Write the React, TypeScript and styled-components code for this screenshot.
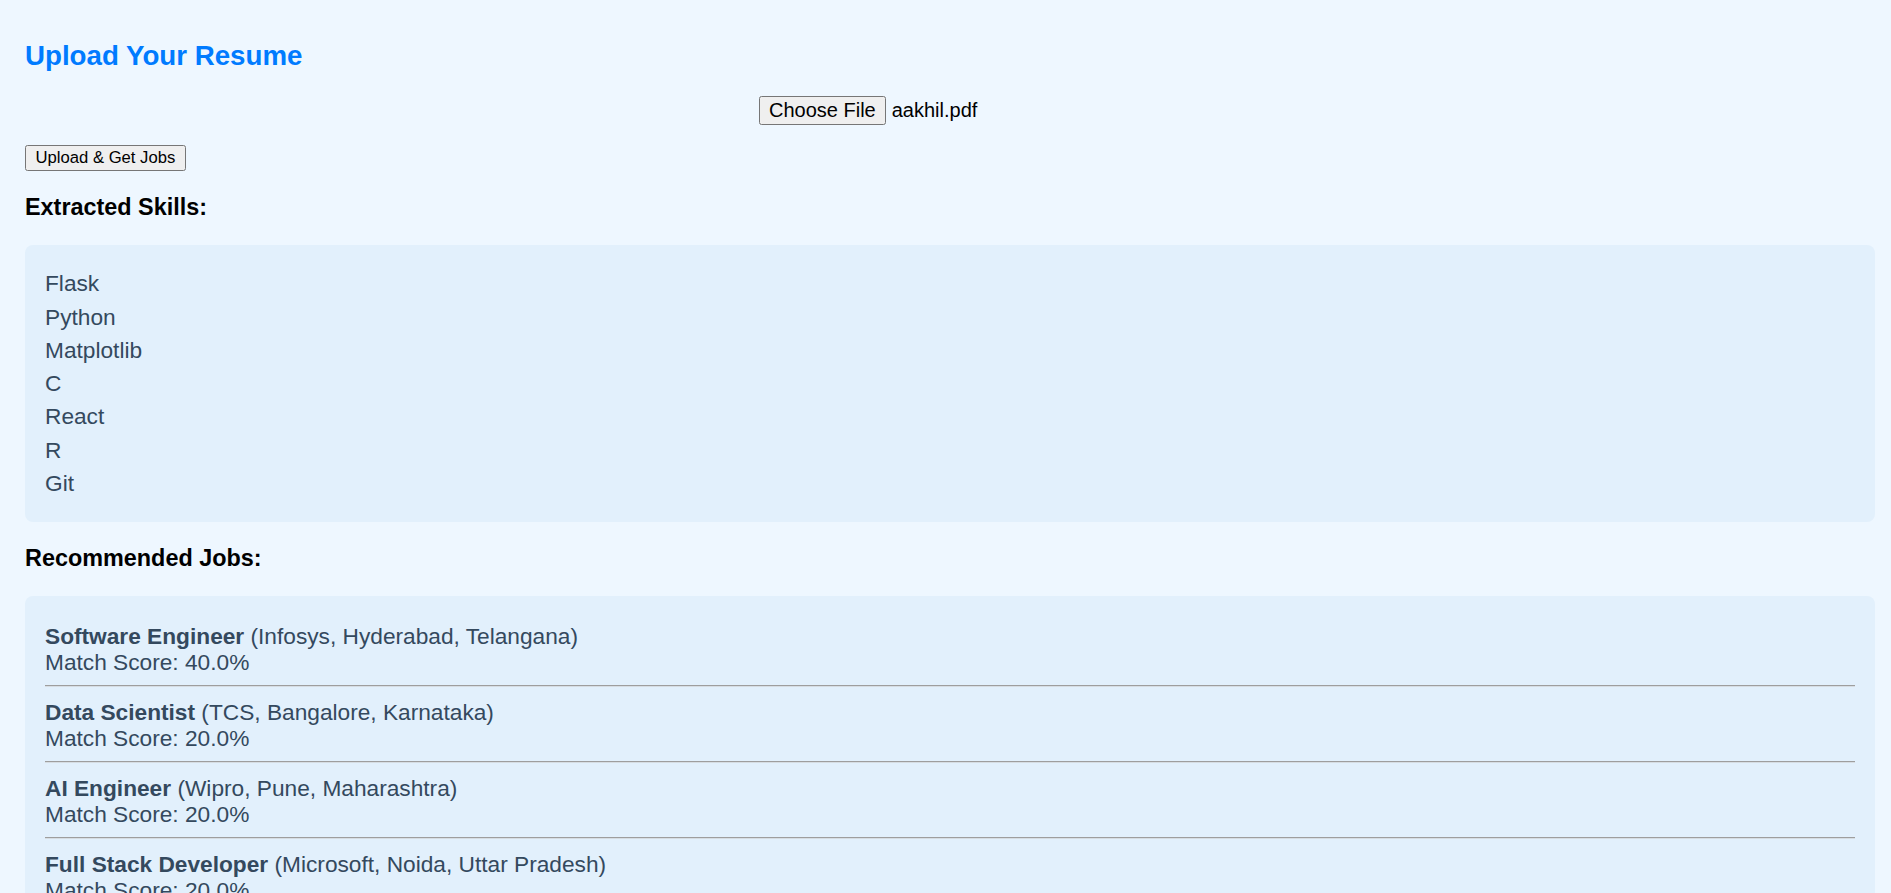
import React from 'react'
import styled, { createGlobalStyle } from 'styled-components'

interface Job {
  title: string
  company: string
  location: string
  score: number
}

const skills = ['Flask', 'Python', 'Matplotlib', 'C', 'React', 'R', 'Git']

const jobs: Job[] = [
  { title: 'Software Engineer', company: 'Infosys', location: 'Hyderabad, Telangana', score: 40 },
  { title: 'Data Scientist', company: 'TCS', location: 'Bangalore, Karnataka', score: 20 },
  { title: 'AI Engineer', company: 'Wipro', location: 'Pune, Maharashtra', score: 20 },
  { title: 'Full Stack Developer', company: 'Microsoft', location: 'Noida, Uttar Pradesh', score: 20 },
]

const GlobalStyle = createGlobalStyle`
  html, body {
    margin: 0;
    background: #eef7ff;
  }
  body {
    font-family: "Liberation Sans", Arial, sans-serif;
  }
`

export default function App() {
  return (
    <>
      <GlobalStyle />
      <Page>
        <Title>Upload Your Resume</Title>
        <FilePicker>
          <PickerButton type="button">Choose File</PickerButton>
          <FileName>aakhil.pdf</FileName>
        </FilePicker>
        <UploadButton type="button">Upload &amp; Get Jobs</UploadButton>

        <SectionTitle>Extracted Skills:</SectionTitle>
        <Panel>
          <SkillList>
            {skills.map((skill) => (
              <SkillItem key={skill}>{skill}</SkillItem>
            ))}
          </SkillList>
        </Panel>

        <SectionTitle>Recommended Jobs:</SectionTitle>
        <Panel compact>
          <JobList>
            {jobs.map((job) => (
              <JobItem key={job.title}>
                <JobLine>
                  <JobTitle>{job.title}</JobTitle> ({job.company}, {job.location})
                </JobLine>
                <JobLine>Match Score: {job.score.toFixed(1)}%</JobLine>
              </JobItem>
            ))}
          </JobList>
        </Panel>
      </Page>
    </>
  )
}

const Page = styled.main`
  display: flex;
  flex-direction: column;
  align-items: flex-start;
  padding: 40px 16px 40px 25px;
`

const Title = styled.h2`
  margin: 0;
  font-size: 27.7px;
  line-height: 32px;
  font-weight: 700;
  color: #007bff;
`

const FilePicker = styled.div`
  display: flex;
  align-items: center;
  align-self: center;
  width: 382px;
  margin-top: 24px;
`

const PickerButton = styled.button`
  height: 29px;
  padding: 0 9px;
  margin: 0;
  font-family: "Liberation Sans", Arial, sans-serif;
  font-size: 20px;
  color: #000;
  background: #efefef;
  border: 1px solid #767676;
  border-radius: 2.5px;
`

const FileName = styled.span`
  margin-left: 6px;
  font-size: 20px;
  color: #000;
`

const UploadButton = styled.button`
  height: 26px;
  margin-top: 20px;
  padding: 0 9.5px;
  font-family: "Liberation Sans", Arial, sans-serif;
  font-size: 16.67px;
  color: #000;
  background: #efefef;
  border: 1px solid #767676;
  border-radius: 2.5px;
`

const SectionTitle = styled.h3`
  margin: 22.7px 0 24.8px;
  font-size: 23.4px;
  line-height: 26.9px;
  font-weight: 700;
  color: #000;
`

const Panel = styled.section<{ compact?: boolean }>`
  align-self: stretch;
  padding: ${({ compact }) => (compact ? '13.8px 20px 20px' : '24.9px 20px 25.3px')};
  background: #e2f0fc;
  border-radius: 8px;
`

const SkillList = styled.ul`
  display: grid;
  gap: 6.6px;
  margin: 0;
  padding: 0;
  list-style: none;
`

const SkillItem = styled.li`
  font-size: 22.7px;
  line-height: 26.7px;
  color: #34495e;
`

const JobList = styled.ul`
  margin: 0;
  padding: 0;
  list-style: none;
`

const JobItem = styled.li`
  padding: 12.3px 0 9.3px;
  border-bottom: 1px solid #9e9e9e;
  box-shadow: 0 1px 0 #d6dde3;

  &:last-child {
    border-bottom: none;
    box-shadow: none;
  }
`

const JobLine = styled.div`
  font-size: 22.7px;
  line-height: 26.7px;
  color: #34495e;
`

const JobTitle = styled.strong`
  font-weight: 700;
`
